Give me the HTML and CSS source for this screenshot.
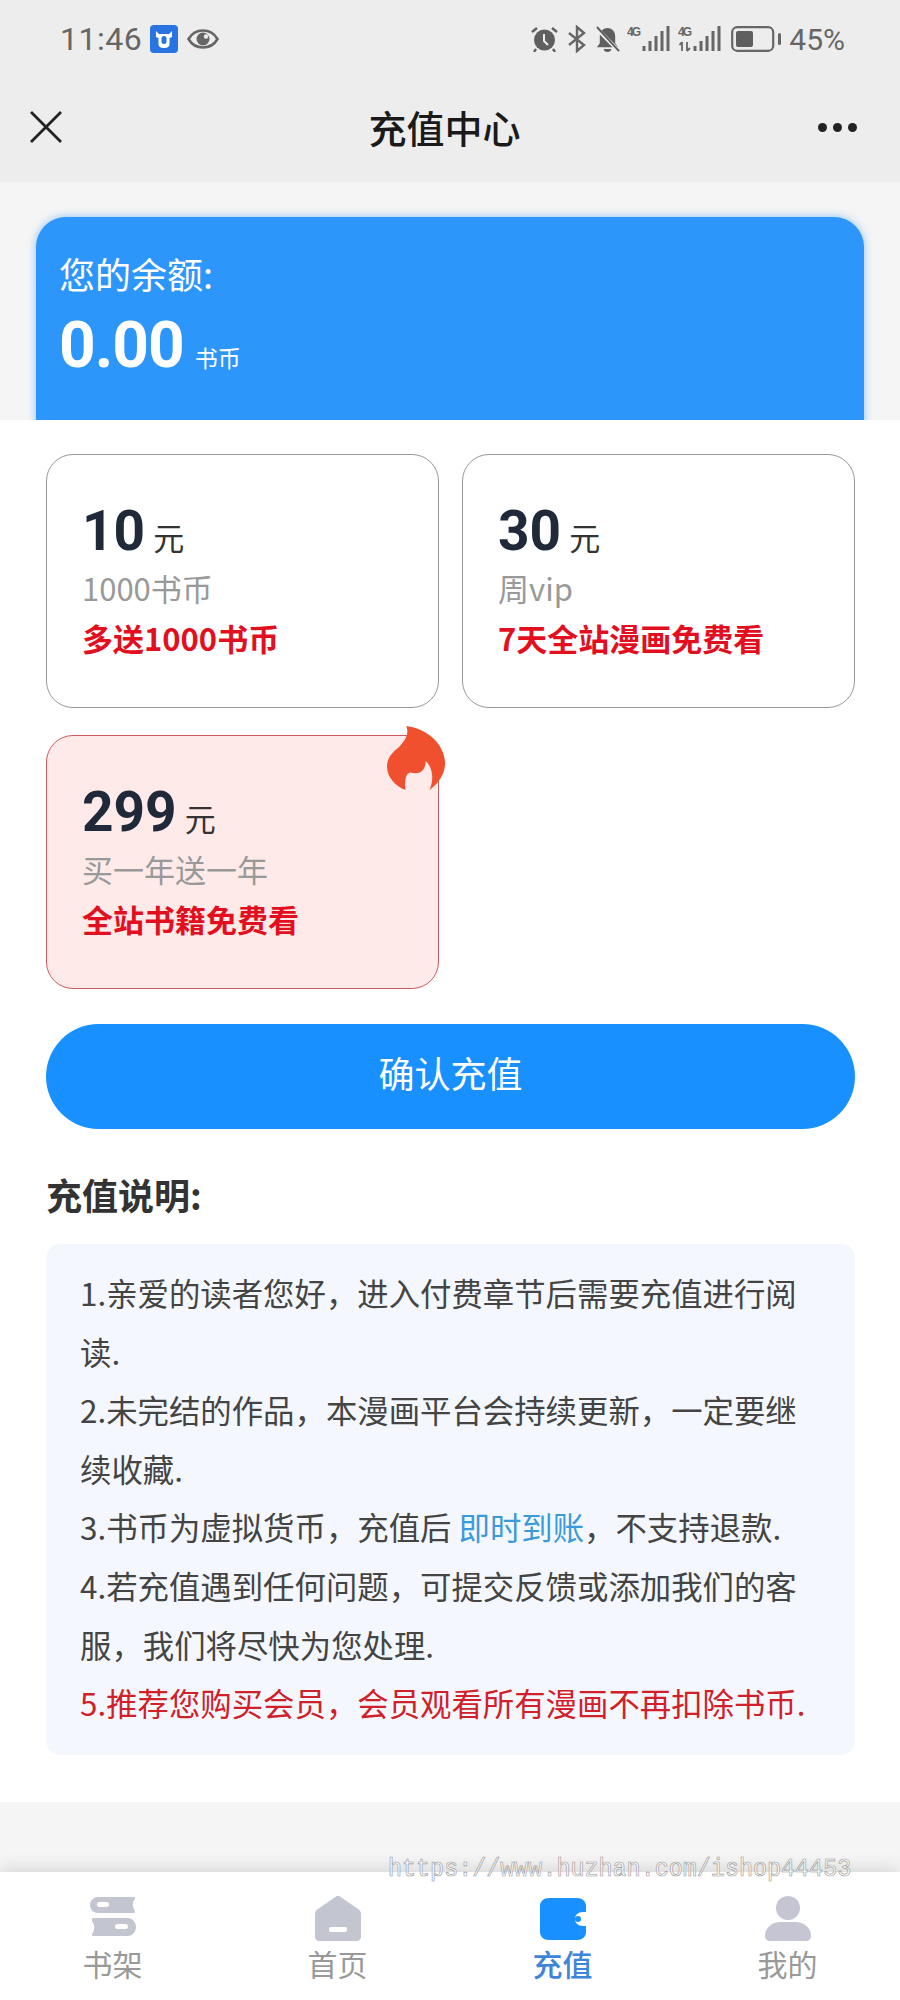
FILE: index.html
```html
<!DOCTYPE html>
<html lang="zh-CN">
<head>
    <meta charset="UTF-8">
    <meta name="viewport" content="width=device-width, initial-scale=1.0">
    <title>充值中心</title>
    <link rel="stylesheet" href="styles.css">
</head>
<body>
    <header class="top">
        <div class="status">
            <div class="status-left">
                <span class="clock">11:46</span>
                <svg class="app-icon" viewBox="0 0 28 28">
                    <rect width="28" height="28" rx="4" fill="#2a74e2"/>
                    <path d="M6 6l3 3h10l3-3v6l-2.500 1v6c0 3-2.500 4-5.500 4s-5.500-1-5.500-4v-6L6 12z" fill="#fff"/>
                    <rect x="11.500" y="11" width="5" height="8" rx="2.500" fill="#2a74e2"/>
                </svg>
                <svg class="eye-icon" viewBox="0 0 32 20">
                    <path d="M1.500 10C5 4 10 1.500 16 1.500S27 4 30.500 10C27 16 22 18.500 16 18.500S5 16 1.500 10z" fill="none" stroke="#666" stroke-width="2.600"/>
                    <circle cx="16" cy="10" r="6.500" fill="#666"/>
                    <circle cx="19" cy="7.500" r="2.200" fill="#ededed"/>
                </svg>
            </div>
            <div class="status-right">
                <svg class="st-alarm" viewBox="0 0 27 26">
                    <circle cx="13.500" cy="14" r="10.500" fill="#5f5f5f"/>
                    <path d="M13 8v7l4 4" fill="none" stroke="#ededed" stroke-width="2"/>
                    <path d="M1 6l5-4M26 6l-5-4M5 23l-2 3M22 23l2 3" stroke="#5f5f5f" stroke-width="2.400" fill="none"/>
                </svg>
                <svg class="st-bt" viewBox="0 0 20 28">
                    <path d="M2 8l15 12-7 6V2l7 6L2 20" fill="none" stroke="#666" stroke-width="2.400"/>
                </svg>
                <svg class="st-bell" viewBox="0 0 26 28">
                    <path d="M13 2c5 0 8 4 8 9v7l3 4H2l3-4v-7c0-5 3-9 8-9z" fill="#5f5f5f"/>
                    <path d="M9 24h8c0 2-2 3-4 3s-4-1-4-3z" fill="#5f5f5f"/>
                    <path d="M1 2l24 24" stroke="#ededed" stroke-width="4"/>
                    <path d="M2 1l23 25" stroke="#5f5f5f" stroke-width="2"/>
                </svg>
                <svg class="st-signal" viewBox="0 0 43 26">
                    <text x="0" y="10" class="net" textLength="14">4G</text>
                    <path d="M17 20v5M23 15v10M29 10v15M35 5v20M41 0v25" stroke="#666" stroke-width="3" fill="none"/>
                </svg>
                <svg class="st-signal" viewBox="0 0 43 26">
                    <text x="0" y="10" class="net" textLength="14">4G</text>
                    <path d="M4 25v-9M1.500 19l2.500-3M9 16v9M9 25l3-3" stroke="#666" stroke-width="1.800" fill="none"/>
                    <path d="M17 20v5M23 15v10M29 10v15M35 5v20M41 0v25" stroke="#666" stroke-width="3" fill="none"/>
                </svg>
                <svg class="st-battery" viewBox="0 0 50 26">
                    <rect x="1.200" y="1.200" width="41" height="23.600" rx="5" fill="none" stroke="#666" stroke-width="2.200"/>
                    <rect x="5" y="5" width="17" height="16" rx="2" fill="#5f5f5f"/>
                    <rect x="47" y="7" width="3" height="12" rx="1.500" fill="#666"/>
                </svg>
                <span class="percent">45%</span>
            </div>
        </div>
        <div class="nav">
            <svg class="nav-close" viewBox="0 0 32 32">
                <path d="M1 1l30 30M31 1L1 31" stroke="#222" stroke-width="2.800" fill="none"/>
            </svg>
            <h1 class="nav-title">充值中心</h1>
            <div class="nav-more"><i></i><i></i><i></i></div>
        </div>
    </header>

    <section class="balance-wrap">
        <div class="balance">
            <p class="balance-label">您的余额:</p>
            <p class="balance-num">0.00<span>书币</span></p>
        </div>
    </section>

    <main class="panel">
        <div class="plans">
            <div class="plan">
                <p class="plan-price">10<span>元</span></p>
                <p class="plan-sub">1000书币</p>
                <p class="plan-gift">多送1000书币</p>
            </div>
            <div class="plan">
                <p class="plan-price">30<span>元</span></p>
                <p class="plan-sub">周vip</p>
                <p class="plan-gift">7天全站漫画免费看</p>
            </div>
            <div class="plan plan-hot">
                <svg class="flame" viewBox="0 0 60 66">
                    <path d="M20 0c22 3 38 18 40 36 1 12-6 23-16 30 2-5 4-12 2-19-1-5-3-8-6-11 0 6-2 10-6 12-3 1-7 1-10 0-4 1-6 6-5 18C8 62 0 52 0 42c0-10 6-15 13-21 6-6 10-13 7-21z" fill="#f0502d"/>
                </svg>
                <p class="plan-price">299<span>元</span></p>
                <p class="plan-sub">买一年送一年</p>
                <p class="plan-gift">全站书籍免费看</p>
            </div>
        </div>

        <button class="confirm" type="button">确认充值</button>

        <h2 class="notes-title">充值说明:</h2>
        <div class="notes">
            <p>1.亲爱的读者您好，进入付费章节后需要充值进行阅读.</p>
            <p>2.未完结的作品，本漫画平台会持续更新，一定要继续收藏.</p>
            <p>3.书币为虚拟货币，充值后 <span class="link">即时到账</span>，不支持退款.</p>
            <p>4.若充值遇到任何问题，可提交反馈或添加我们的客服，我们将尽快为您处理.</p>
            <p class="warn">5.推荐您购买会员，会员观看所有漫画不再扣除书币.</p>
        </div>
    </main>

    <div class="gap"></div>

    <div class="watermark">https://www.huzhan.com/ishop44453</div>

    <nav class="tabs">
        <div class="tab">
            <svg viewBox="0 0 46 46">
                <path d="M8 2h36c1 0 1 1 1 2-3 3-3 8 0 12 0 1 0 2-1 2H8c-4 0-8-3-8-8s4-8 8-8z" fill="#c3c6d0"/>
                <rect x="7" y="7" width="12" height="5" rx="2.500" fill="#fff"/>
                <path d="M3 23h35c4 0 8 4 8 9s-4 9-8 9H3c-1 0-1-1-1-2 3-4 3-9 0-13 0-2 0-3 1-3z" fill="#c3c6d0"/>
                <rect x="25" y="29" width="13" height="5" rx="2.500" fill="#fff"/>
            </svg>
            <span>书架</span>
        </div>
        <div class="tab">
            <svg viewBox="0 0 46 46">
                <path d="M21 1.500c1-1 3-1 4 0L43 14c2 1 3 3 3 5v23c0 2-2 4-4 4H4c-2 0-4-2-4-4V19c0-2 1-4 3-5z" fill="#c3c6d0"/>
                <rect x="14" y="32" width="18" height="5" rx="2" fill="#fff"/>
            </svg>
            <span>首页</span>
        </div>
        <div class="tab tab-on">
            <svg viewBox="0 0 46 46">
                <path d="M9 3h28c5 0 9 3 9 8v6h-3c-5 0-8 3-8 7s3 7 8 7h3v6c0 5-4 8-9 8H9c-5 0-9-3-9-8V11c0-5 4-8 9-8z" fill="#1890ff"/>
                <circle cx="38" cy="24" r="3" fill="#1890ff"/>
            </svg>
            <span>充值</span>
        </div>
        <div class="tab">
            <svg viewBox="0 0 46 46">
                <circle cx="23" cy="13" r="12" fill="#c5c5d3"/>
                <path d="M16 27h14c9 0 16 6 16 14 0 3-2 5-5 5H5c-3 0-5-2-5-5 0-8 7-14 16-14z" fill="#c5c5d3"/>
            </svg>
            <span>我的</span>
        </div>
    </nav>
</body>
</html>
```

FILE: styles.css
```css
* {
    box-sizing: border-box;
}
body {
    margin: 0;
    width: 900px;
    height: 2000px;
    overflow: hidden;
    position: relative;
    font-family: "Noto Sans CJK SC", Roboto, sans-serif;
    background-color: #fff;
    color: #333;
}
p, h1, h2 {
    margin: 0;
}

/* top bar */
.top {
    height: 182px;
    background-color: #ededed;
}
.status {
    height: 78px;
    padding: 0 55px 0 60px;
    display: flex;
    justify-content: space-between;
    align-items: center;
    color: #666;
}
.status-left, .status-right {
    display: flex;
    align-items: center;
}
.clock {
    font-family: Roboto, sans-serif;
    font-size: 32px;
    letter-spacing: 0.5px;
    width: 90px;
}
.app-icon {
    width: 28px;
    height: 28px;
}
.eye-icon {
    width: 32px;
    height: 20px;
    margin-left: 9px;
}
.status-right svg {
    display: block;
}
.st-alarm {
    width: 27px;
    height: 26px;
}
.st-bt {
    width: 20px;
    height: 28px;
    margin-left: 9px;
}
.st-bell {
    width: 25px;
    height: 27px;
    margin-left: 8px;
}
.st-signal {
    width: 43px;
    height: 26px;
    margin-left: 7px;
}
.st-signal + .st-signal {
    margin-left: 8px;
}
.net {
    font-family: "Liberation Sans", sans-serif;
    font-size: 12px;
    font-weight: bold;
    fill: #666;
}
.st-battery {
    width: 50px;
    height: 26px;
    margin-left: 10px;
}
.percent {
    font-family: Roboto, sans-serif;
    font-size: 30px;
    margin-left: 8px;
}
.nav {
    height: 104px;
    padding: 0 42px 6px 30px;
    display: flex;
    align-items: center;
    justify-content: space-between;
}
.nav-close {
    width: 32px;
    height: 32px;
}
.nav-title {
    margin-left: 9px;
    font-size: 38px;
    font-weight: 500;
    color: #1a1a1a;
    line-height: 50px;
}
.nav-more {
    display: flex;
    gap: 6px;
    width: 40px;
}
.nav-more i {
    width: 9px;
    height: 9px;
    border-radius: 50%;
    background-color: #222;
}

/* balance */
.balance-wrap {
    height: 238px;
    padding: 35px 36px 0;
    background-color: #f5f5f5;
    overflow: hidden;
}
.balance {
    height: 240px;
    padding: 32px 23px;
    border-radius: 30px;
    background-color: #2d96fb;
    box-shadow: 0 0 8px rgba(45, 150, 251, 0.55);
    color: #fff;
}
.balance-label {
    font-size: 36px;
    line-height: 48px;
}
.balance-num {
    font-family: Roboto, sans-serif;
    font-size: 64px;
    font-weight: 700;
    letter-spacing: -1px;
    line-height: 76px;
    margin-top: 11px;
}
.balance-num span {
    margin-left: 11px;
    letter-spacing: 0;
    font-family: "Noto Sans CJK SC", sans-serif;
    font-size: 23px;
    font-weight: 400;
}

/* plans */
.panel {
    height: 1382px;
    padding: 34px 45px 0 46px;
    background-color: #fff;
}
.plans {
    display: grid;
    grid-template-columns: 393px 393px;
    column-gap: 23px;
    row-gap: 27px;
}
.plan {
    position: relative;
    height: 254px;
    padding: 48px 0 0 35px;
    border: 1.5px solid #999;
    border-radius: 27px;
    background-color: #fff;
}
.plan-hot {
    background-color: #ffeaea;
    border-color: #cc5a5e;
}
.flame {
    position: absolute;
    right: -7px;
    top: -10px;
    width: 58px;
    height: 64px;
}
.plan-price {
    font-family: Roboto, sans-serif;
    font-size: 55px;
    font-weight: 700;
    line-height: 56px;
    color: #20293a;
}
.plan-price span {
    margin-left: 8px;
    font-family: "Noto Sans CJK SC", sans-serif;
    font-size: 31px;
    font-weight: 400;
    color: #333;
}
.plan-sub {
    font-size: 31px;
    line-height: 46px;
    color: #999;
}
.plan-gift {
    margin-top: 4px;
    font-size: 31px;
    line-height: 46px;
    font-weight: 700;
    color: #e2101f;
}

/* button */
.confirm {
    display: block;
    width: 809px;
    height: 105px;
    margin-top: 35px;
    padding-bottom: 11px;
    border: none;
    border-radius: 53px;
    background-color: #1890ff;
    color: #fff;
    font-family: "Noto Sans CJK SC", sans-serif;
    font-size: 36px;
}

/* notes */
.notes-title {
    margin-top: 40px;
    font-size: 36px;
    font-weight: 700;
    line-height: 50px;
    color: #333;
}
.notes {
    width: 809px;
    height: 511px;
    margin-top: 25px;
    padding: 20px 40px 0 34px;
    border-radius: 14px;
    background-color: #f4f8fe;
    font-size: 31.4px;
    line-height: 58.6px;
    color: #444;
}
.link {
    color: #3b9ad9;
}
.warn {
    color: #d0202a;
}

/* bottom */
.gap {
    height: 70px;
    background-color: #f5f5f5;
}
.watermark {
    position: absolute;
    left: 388px;
    top: 1854px;
    font-family: "Liberation Mono", monospace;
    font-size: 23.4px;
    line-height: 30px;
    color: rgba(255, 255, 255, 0.7);
    -webkit-text-stroke: 0.6px #999;
    transform: scaleY(1.12);
    z-index: 2;
}
.tabs {
    position: relative;
    height: 128px;
    padding-top: 23px;
    display: grid;
    grid-template-columns: repeat(4, 225px);
    background-color: #fff;
    box-shadow: 0 -4px 16px rgba(0, 0, 0, 0.12);
}
.tab {
    display: flex;
    flex-direction: column;
    align-items: center;
    font-size: 30px;
    line-height: 44px;
    color: #999;
}
.tab svg {
    width: 46px;
    height: 46px;
}
.tab-on {
    color: #3d85d8;
    font-weight: 500;
}
```
